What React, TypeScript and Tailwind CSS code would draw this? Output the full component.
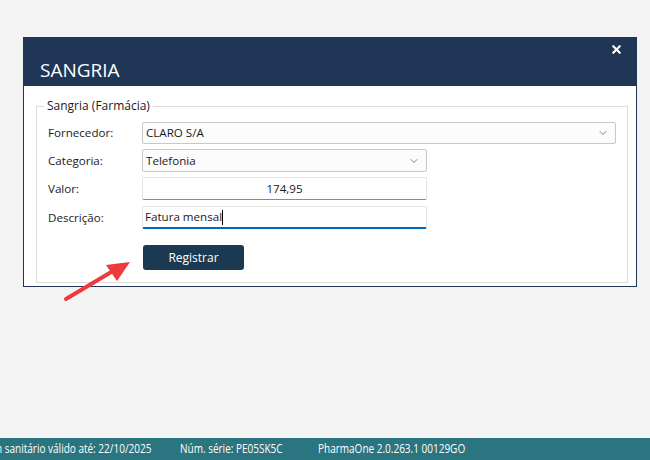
import { X, ChevronDown } from 'lucide-react';

const font = { fontFamily: '"Open Sans", "Noto Sans", sans-serif' };

const App = () => {
  return (
    <div
      className="relative w-[650px] h-[460px] bg-[#f3f3f3] flex flex-col overflow-hidden text-[#1a1a1a]"
      style={font}
    >
      {/* Dialog */}
      <div className="ml-[23px] mt-[37px] w-[614px] h-[250px] border border-[#1e3556] bg-white flex flex-col">
        <div className="relative h-[48px] bg-[#1f3657] flex items-end pl-[16px] pb-[3px]">
          <span className="text-white text-[19px] leading-[26px]">SANGRIA</span>
          <X className="absolute right-[13px] top-[5px] w-[13px] h-[13px] text-white" strokeWidth={4} />
        </div>

        <fieldset className="mx-[12px] mt-[12px] h-[185px] border border-[#dcdcdc] px-[11px] pt-[7px]">
          <legend className="ml-[-4px] px-[3px] text-[12px] leading-[16px]">Sangria (Farmácia)</legend>

          <div className="flex flex-col text-[11.6px]">
            <div className="flex items-center h-[22px] mt-[1px]">
              <span className="w-[94px]">Fornecedor:</span>
              <div className="flex items-center justify-between w-[474px] h-[22px] border border-[#c8c8c8] rounded-[2px] bg-[#fcfcfc] pl-[3px] pr-[6px]">
                <span>CLARO S/A</span>
                <ChevronDown className="w-[12px] h-[12px] text-[#555]" strokeWidth={1.5} />
              </div>
            </div>

            <div className="flex items-center h-[23px] mt-[5px]">
              <span className="w-[94px]">Categoria:</span>
              <div className="flex items-center justify-between w-[285px] h-[23px] border border-[#c8c8c8] rounded-[2px] bg-[#fcfcfc] pl-[3px] pr-[6px]">
                <span>Telefonia</span>
                <ChevronDown className="w-[12px] h-[12px] text-[#555]" strokeWidth={1.5} />
              </div>
            </div>

            <div className="flex items-center h-[23px] mt-[5px]">
              <span className="w-[94px]">Valor:</span>
              <div className="flex items-center justify-center w-[285px] h-[23px] border border-[#e3e3e3] border-b-[#8a8a8a] rounded-[2px] bg-white">
                <span>174,95</span>
              </div>
            </div>

            <div className="flex items-center h-[23px] mt-[6px]">
              <span className="w-[94px]">Descrição:</span>
              <div className="flex items-center w-[285px] h-[23px] border border-[#e3e3e3] border-b-2 border-b-[#0067c0] rounded-[2px] bg-white pl-[2px]">
                <span>Fatura mensal</span>
                <span className="w-px h-[15px] bg-black" />
              </div>
            </div>

            <div className="flex mt-[16px] pl-[95px]">
              <button className="w-[101px] h-[25px] rounded-[3px] bg-[#1b3a52] text-white text-[12px]">
                Registrar
              </button>
            </div>
          </div>
        </fieldset>
      </div>

      {/* Arrow annotation */}
      <svg className="absolute left-[60px] top-[255px]" width="80" height="50" viewBox="0 0 80 50">
        <line x1="6" y1="44" x2="58" y2="13" stroke="#ee3a3a" strokeWidth="4" strokeLinecap="round" />
        <polygon points="70,7 46,10 57,26" fill="#ee3a3a" />
      </svg>

      {/* Status bar */}
      <div className="mt-auto h-[22px] bg-[#2a7580] flex items-center text-white text-[12.5px] whitespace-nowrap">
        <span className="ml-[-4px] w-[184px]">
          <span className="inline-block origin-left scale-x-[0.8]">n sanitário válido até: 22/10/2025</span>
        </span>
        <span className="w-[138px]">
          <span className="inline-block origin-left scale-x-[0.8]">Núm. série: PE05SK5C</span>
        </span>
        <span>
          <span className="inline-block origin-left scale-x-[0.8]">PharmaOne 2.0.263.1 00129GO</span>
        </span>
      </div>
    </div>
  );
};

export default App;
